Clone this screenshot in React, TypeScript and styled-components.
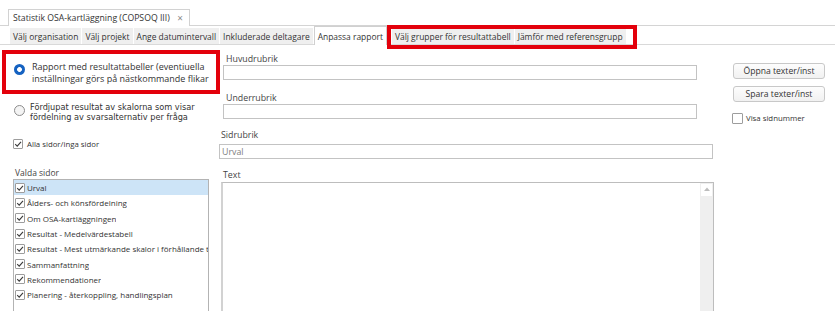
import React from 'react';
import styled, { createGlobalStyle } from 'styled-components';

const GlobalStyle = createGlobalStyle`
  html, body { margin: 0; padding: 0; background: #fff; }
  body { font-family: "Open Sans", "Noto Sans", Arial, sans-serif; color: #333; }
  * { box-sizing: border-box; }
`;

const Page = styled.div`
  width: 835px;
  height: 327px;
  overflow: hidden;
  background: #fff;
`;

const TitleBar = styled.div`
  display: flex;
  align-items: flex-start;
  height: 26px;
  padding: 9px 0 0 8px;
  border-bottom: 1px solid #d4d4d4;
`;

const WindowTab = styled.div`
  display: flex;
  align-items: center;
  justify-content: space-between;
  width: 182px;
  height: 17px;
  padding: 0 6px 0 4px;
  border: 1px solid #d2d2d2;
  border-bottom: none;
  background: #fff;
  font-size: 8.7px;
  color: #333;
  white-space: nowrap;
`;

const CloseMark = styled.span`
  font-size: 10px;
  color: #8a8a8a;
  line-height: 1;
`;

const TabStrip = styled.div`
  display: flex;
  align-items: flex-end;
  height: 19px;
  padding-left: 10px;
  border-bottom: 1px solid #d9d9d9;
`;

const Tab = styled.div<{ $active?: boolean }>`
  display: flex;
  align-items: center;
  height: ${(p) => (p.$active ? '19px' : '16px')};
  margin-bottom: ${(p) => (p.$active ? '-1px' : '0')};
  margin-right: 1px;
  padding: 0 3px;
  background: ${(p) => (p.$active ? '#fff' : '#efefef')};
  border: ${(p) => (p.$active ? '1px solid #d0d0d0' : 'none')};
  border-bottom: none;
  font-size: 8.45px;
  color: #333;
  white-space: nowrap;
`;

const HighlightGroup = styled.div`
  display: flex;
  align-items: flex-end;
  height: 16px;
  margin: 0 0 -1px 3px;
  padding: 0 6px 1px 1px;
  outline: 4px solid #e3000b;
`;

const Main = styled.div`
  display: grid;
  grid-template-columns: 219px 514px 102px;
  height: 283px;
`;

const Column = styled.div`
  display: flex;
  flex-direction: column;
  min-width: 0;
`;

const HighlightBox = styled.div`
  margin: 5px 0 0 2px;
  width: 218px;
  height: 44px;
  flex: none;
  border: 4px solid #e3000b;
  padding: 7px 0 0 8px;
`;

const RadioOption = styled.div<{ $mt?: number; $pl?: number; $gap: number }>`
  display: flex;
  align-items: flex-start;
  gap: ${(p) => p.$gap}px;
  margin-top: ${(p) => p.$mt ?? 0}px;
  padding-left: ${(p) => p.$pl ?? 0}px;
`;

const Radio = styled.span<{ $checked?: boolean }>`
  flex: none;
  width: 11px;
  height: 11px;
  margin-top: 3px;
  border-radius: 50%;
  background: ${(p) =>
    p.$checked
      ? 'radial-gradient(circle, #fff 0 2.1px, #1562c1 2.6px)'
      : '#f4f4f4'};
  border: ${(p) => (p.$checked ? 'none' : '1px solid #8c8c8c')};
`;

const RadioText = styled.div<{ $alt?: boolean }>`
  font-family: ${(p) => (p.$alt ? '"DejaVu Sans", Verdana, sans-serif' : 'inherit')};
  font-size: ${(p) => (p.$alt ? '8.2px' : '9px')};
  line-height: ${(p) => (p.$alt ? '10px' : '12.3px')};
  color: #333;
  white-space: nowrap;
`;

const CheckRow = styled.div<{ $mt: number; $pl: number; $gap: number; $ml?: number }>`
  display: flex;
  align-items: center;
  height: 12px;
  margin-top: ${(p) => p.$mt}px;
  margin-left: ${(p) => p.$ml ?? 0}px;
  padding-left: ${(p) => p.$pl}px;
  gap: ${(p) => p.$gap}px;
  font-size: 7.8px;
  color: #333;
  white-space: nowrap;
`;

const Box = styled.span<{ $size: number }>`
  flex: none;
  display: flex;
  align-items: center;
  justify-content: center;
  width: ${(p) => p.$size}px;
  height: ${(p) => p.$size}px;
  border: 1px solid #9d9d9d;
  border-radius: 1px;
  background: #fff;
`;

const SectionLabel = styled.div`
  margin-top: 17px;
  padding-left: 15px;
  height: 12px;
  font-size: 8.5px;
  line-height: 12px;
  color: #444;
`;

const ListBox = styled.div`
  margin-left: 13px;
  width: 196px;
  height: 132px;
  border: 1px solid #b3b3b3;
  border-bottom: none;
  overflow: hidden;
`;

const ListItem = styled.div<{ $selected?: boolean }>`
  display: flex;
  align-items: center;
  gap: 2px;
  height: 15.3px;
  padding-left: 1px;
  background: ${(p) => (p.$selected ? '#cde4f7' : 'transparent')};
  font-size: 8px;
  color: #333;
  white-space: nowrap;
  overflow: hidden;
`;

const ItemText = styled.span`
  overflow: hidden;
  text-overflow: clip;
`;

const FieldLabel = styled.div<{ $x: number; $mt: number; $mb: number }>`
  height: 12px;
  margin: ${(p) => p.$mt}px 0 ${(p) => p.$mb}px ${(p) => p.$x}px;
  font-size: 8.8px;
  line-height: 12px;
  color: #444;
  white-space: nowrap;
`;

const TextInput = styled.input<{ $x: number; $w: number }>`
  display: block;
  margin: 0 0 0 ${(p) => p.$x}px;
  width: ${(p) => p.$w}px;
  height: 15px;
  padding: 0 0 0 2px;
  border: 1px solid #c3c3c3;
  border-radius: 0;
  background: #fff;
  font-family: inherit;
  font-size: 8.8px;
  color: #808080;
  outline: none;
`;

const TextArea = styled.div<{ $x: number; $w: number }>`
  display: flex;
  margin-left: ${(p) => p.$x}px;
  width: ${(p) => p.$w}px;
  height: 129px;
  border-top: 1px solid #bdbdbd;
  border-left: 2px solid #d2d2d2;
  border-right: 1px solid #bdbdbd;
`;

const TextAreaBody = styled.div`
  flex: 1;
  background: #fff;
`;

const ScrollBar = styled.div`
  width: 13px;
  background: #efefef;
  padding: 1px;
`;

const ScrollButton = styled.div`
  display: flex;
  align-items: flex-start;
  justify-content: center;
  height: 12px;
  padding-top: 3px;
  background: #fff;
`;

const RightCol = styled(Column)`
  padding-top: 18px;
`;

const Button = styled.button<{ $mt?: number }>`
  width: 92px;
  height: 16px;
  margin-top: ${(p) => p.$mt ?? 0}px;
  padding: 0;
  border: 1px solid #c8c8c8;
  border-radius: 3px;
  background: linear-gradient(#fdfdfd, #f1f1f1);
  font-family: inherit;
  font-size: 8.6px;
  line-height: 14px;
  color: #333;
  cursor: default;
`;

const Check = () => (
  <svg width="8" height="8" viewBox="0 0 8 8">
    <polyline points="1.2,4.2 3.2,6.2 7,1.8" fill="none" stroke="#3a3a3a" strokeWidth="1.1" />
  </svg>
);

const pages = [
  'Urval',
  'Ålders- och könsfördelning',
  'Om OSA-kartläggningen',
  'Resultat - Medelvärdestabell',
  'Resultat - Mest utmärkande skalor i förhållande till referensgrupp',
  'Sammanfattning',
  'Rekommendationer',
  'Planering - återkoppling, handlingsplan',
];

export default function App() {
  return (
    <Page>
      <GlobalStyle />
      <TitleBar>
        <WindowTab>
          <span>Statistik OSA-kartläggning (COPSOQ III)</span>
          <CloseMark>×</CloseMark>
        </WindowTab>
      </TitleBar>
      <TabStrip>
        <Tab>Välj organisation</Tab>
        <Tab>Välj projekt</Tab>
        <Tab>Ange datumintervall</Tab>
        <Tab>Inkluderade deltagare</Tab>
        <Tab $active>Anpassa rapport</Tab>
        <HighlightGroup>
          <Tab>Välj grupper för resultattabell</Tab>
          <Tab>Jämför med referensgrupp</Tab>
        </HighlightGroup>
      </TabStrip>
      <Main>
        <Column>
          <HighlightBox>
            <RadioOption $gap={7}>
              <Radio $checked />
              <RadioText>
                Rapport med resultattabeller (eventiuella
                <br />
                inställningar görs på nästkommande flikar
              </RadioText>
            </RadioOption>
          </HighlightBox>
          <RadioOption $mt={8} $pl={14} $gap={5}>
            <Radio />
            <RadioText $alt>
              Fördjupat resultat av skalorna som visar
              <br />
              fördelning av svarsalternativ per fråga
            </RadioText>
          </RadioOption>
          <CheckRow $mt={16} $pl={13} $gap={4}>
            <Box $size={10}>
              <Check />
            </Box>
            <span>Alla sidor/inga sidor</span>
          </CheckRow>
          <SectionLabel>Valda sidor</SectionLabel>
          <ListBox>
            {pages.map((p, i) => (
              <ListItem key={p} $selected={i === 0}>
                <Box $size={10}>
                  <Check />
                </Box>
                <ItemText>{p}</ItemText>
              </ListItem>
            ))}
          </ListBox>
        </Column>
        <Column>
          <FieldLabel $x={7} $mt={8} $mb={0}>Huvudrubrik</FieldLabel>
          <TextInput $x={4} $w={474} readOnly value="" />
          <FieldLabel $x={7} $mt={12} $mb={0}>Underrubrik</FieldLabel>
          <TextInput $x={4} $w={474} readOnly value="" />
          <FieldLabel $x={2} $mt={10} $mb={3}>Sidrubrik</FieldLabel>
          <TextInput $x={0} $w={494} readOnly value="Urval" />
          <FieldLabel $x={4} $mt={10} $mb={1}>Text</FieldLabel>
          <TextArea $x={2} $w={493}>
            <TextAreaBody />
            <ScrollBar>
              <ScrollButton>
                <svg width="6" height="4" viewBox="0 0 6 4">
                  <polygon points="0,4 3,0.5 6,4" fill="#bdbdbd" />
                </svg>
              </ScrollButton>
            </ScrollBar>
          </TextArea>
        </Column>
        <RightCol>
          <Button>Öppna texter/inst</Button>
          <Button $mt={7}>Spara texter/inst</Button>
          <CheckRow $mt={10} $pl={0} $gap={3} $ml={-1}>
            <Box $size={11} />
            <span>Visa sidnummer</span>
          </CheckRow>
        </RightCol>
      </Main>
    </Page>
  );
}
